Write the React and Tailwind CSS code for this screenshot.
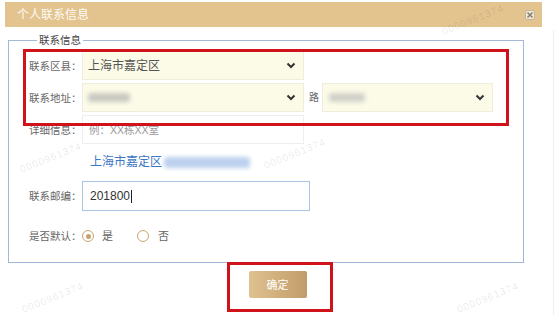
import React from "react";

const Chevron = () => (
  <svg width="10" height="7" viewBox="0 0 10 7" className="shrink-0">
    <polyline points="1.5,1.5 5,5 8.5,1.5" fill="none" stroke="#333" strokeWidth="2" />
  </svg>
);

const Watermark = ({ className }) => (
  <div className={`pointer-events-none absolute rotate-[-22deg] text-[10px] tracking-[1px] text-black/10 ${className}`}>
    0000961374
  </div>
);

const Label = ({ children }) => (
  <div className="w-[53px] shrink-0 text-[10.5px] leading-[14px] text-[#666]">{children}</div>
);

const App = () => {
  return (
    <div className="relative h-[315px] w-[557px] overflow-hidden bg-white font-['Liberation_Sans','Noto_Sans_CJK_SC',sans-serif]">
      {/* header */}
      <div className="ml-[5px] mt-[2px] flex h-[25px] w-[537px] items-center justify-between bg-[#e3c48f] pl-[12px] pr-[7px]">
        <span className="text-[12px] leading-[14px] text-white/95">个人联系信息</span>
        <svg width="10" height="10" viewBox="0 0 10 10">
          <rect x="0.5" y="0.5" width="9" height="9" rx="1.5" fill="#f1e7d4" stroke="#b9ab95" strokeWidth="0.8" />
          <path d="M2.5 2.5 L7.5 7.5 M7.5 2.5 L2.5 7.5" stroke="#8a8070" strokeWidth="1.6" />
        </svg>
      </div>

      {/* form */}
      <fieldset className="ml-[8px] mt-[6px] h-[230px] w-[516px] border border-[#a3b8d6] pl-[20px] pt-[4px]">
        <legend className="ml-[8px] px-[2px] text-[10.5px] leading-[14px] text-[#444]">联系信息</legend>

        <div className="flex h-[29px] items-center">
          <Label>联系区县：</Label>
          <div className="flex h-full w-[222px] items-center justify-between border border-[#efeedd] bg-[#fcfbe8] pl-[5px] pr-[7px]">
            <span className="text-[12px] leading-[14px] text-[#555]">上海市嘉定区</span>
            <Chevron />
          </div>
        </div>

        <div className="mt-[3px] flex h-[29px] items-center">
          <Label>联系地址：</Label>
          <div className="flex h-full w-[222px] items-center justify-between border border-[#efeedd] bg-[#fcfbe8] pl-[5px] pr-[7px]">
            <span className="h-[9px] w-[42px] rounded-[3px] bg-[#c9c9c2] blur-[2px]" />
            <Chevron />
          </div>
          <span className="ml-[5px] w-[13px] text-[10px] leading-[12px] text-[#666]">路</span>
          <div className="flex h-full w-[171px] items-center justify-between border border-[#efeedd] bg-[#fcfbe8] pl-[6px] pr-[7px]">
            <span className="h-[9px] w-[36px] rounded-[3px] bg-[#d1d1ca] blur-[2px]" />
            <Chevron />
          </div>
        </div>

        <div className="mt-[3px] flex h-[29px] items-center">
          <Label>详细信息：</Label>
          <div className="flex h-full w-[222px] items-center border border-[#eeeeee] bg-white pl-[6px]">
            <span className="text-[10.5px] leading-[14px] text-[#999]">例：XX栋XX室</span>
          </div>
        </div>

        <div className="flex h-[36px] items-center pl-[61px]">
          <span className="text-[12px] leading-[14px] text-[#3b76c4]">上海市嘉定区</span>
          <span className="ml-[2px] h-[11px] w-[86px] rounded-[3px] bg-[#bcd0ee] blur-[2px]" />
        </div>

        <div className="mt-[1px] flex h-[30px] items-center">
          <Label>联系邮编：</Label>
          <div className="flex h-full w-[228px] items-center border border-[#a9c4e2] bg-white pl-[7px]">
            <span className="text-[12px] leading-[14px] text-[#333]">201800</span>
            <span className="ml-[1px] h-[13px] w-px bg-[#222]" />
          </div>
        </div>

        <div className="mt-[11px] flex h-[28px] items-center">
          <Label>是否默认：</Label>
          <span className="flex h-[12px] w-[12px] items-center justify-center rounded-full border border-[#c6a46e]">
            <span className="h-[5px] w-[5px] rounded-full bg-[#c6a46e]" />
          </span>
          <span className="ml-[8px] text-[11px] leading-[14px] text-[#666]">是</span>
          <span className="ml-[24px] h-[12px] w-[12px] rounded-full border border-[#c6a46e]" />
          <span className="ml-[9px] text-[11px] leading-[14px] text-[#666]">否</span>
        </div>
      </fieldset>

      <div className="mt-[8px] flex justify-center pr-[2px]">
        <button className="h-[27px] w-[58px] rounded-[2px] bg-gradient-to-r from-[#dfc290] to-[#c19c69] text-[11px] leading-[14px] text-white">
          确定
        </button>
      </div>

      {/* right page edge */}
      <div className="absolute right-[3px] top-[30px] h-[285px] w-px bg-[#eeeeee]" />

      {/* annotations */}
      <div className="pointer-events-none absolute left-[23px] top-[49px] h-[77px] w-[486px] border-[3px] border-[#d0121b]" />
      <div className="pointer-events-none absolute left-[227px] top-[262px] h-[50px] w-[106px] border-[3px] border-[#d0121b]" />

      {/* watermarks */}
      <Watermark className="left-[18px] top-[150px]" />
      <Watermark className="left-[262px] top-[146px]" />
      <Watermark className="left-[20px] top-[290px]" />
      <Watermark className="left-[455px] top-[290px]" />
      <Watermark className="left-[440px] top-[12px]" />
    </div>
  );
};

export default App;
